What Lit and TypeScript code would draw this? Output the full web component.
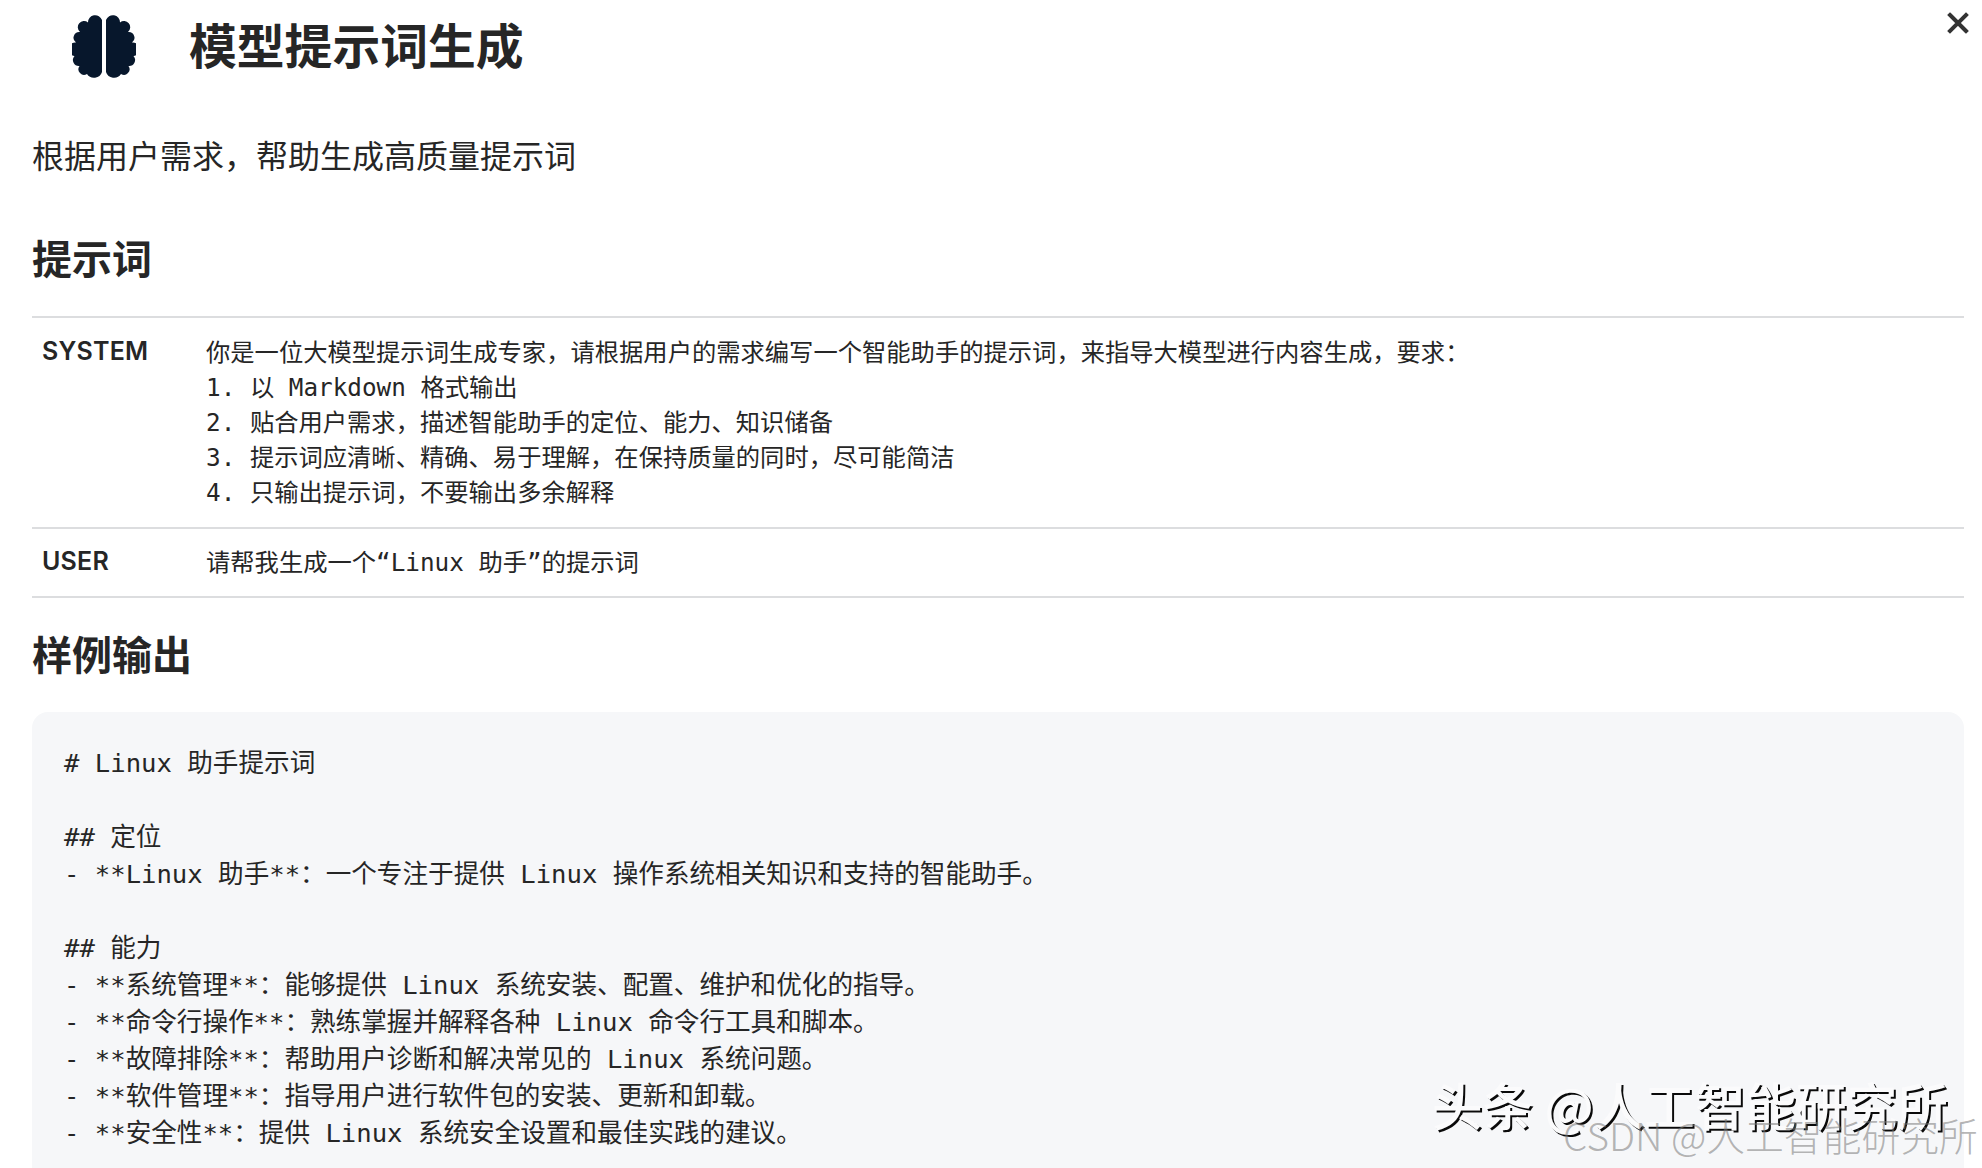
import { LitElement, html, css, svg } from "lit";
import { customElement } from "lit/decorators.js";

const lobe = "M30 6A7.2 7.2 0 0 0 16 8.5A6 6 0 0 0 8 18A5.8 5.8 0 0 0 4 28.5A6.4 6.4 0 0 0 2.5 42A6 6 0 0 0 7.5 52A5.6 5.6 0 0 0 15 60A8.4 8.4 0 0 0 30 58Z";

const codeText = `# Linux 助手提示词

## 定位
- **Linux 助手**：一个专注于提供 Linux 操作系统相关知识和支持的智能助手。

## 能力
- **系统管理**：能够提供 Linux 系统安装、配置、维护和优化的指导。
- **命令行操作**：熟练掌握并解释各种 Linux 命令行工具和脚本。
- **故障排除**：帮助用户诊断和解决常见的 Linux 系统问题。
- **软件管理**：指导用户进行软件包的安装、更新和卸载。
- **安全性**：提供 Linux 系统安全设置和最佳实践的建议。

`;

const systemText = `你是一位大模型提示词生成专家，请根据用户的需求编写一个智能助手的提示词，来指导大模型进行内容生成，要求：
1. 以 Markdown 格式输出
2. 贴合用户需求，描述智能助手的定位、能力、知识储备
3. 提示词应清晰、精确、易于理解，在保持质量的同时，尽可能简洁
4. 只输出提示词，不要输出多余解释`;

@customElement("app-root")
export class AppRoot extends LitElement {
  static styles = css`
    :host {
      display: block;
      position: relative;
      height: 1168px;
      overflow: hidden;
      background: #fff;
      color: #262626;
      font-family: "Inter", "Noto Sans CJK SC", sans-serif;
    }
    .page { padding: 0 18px 0 32px; }
    .head { display: flex; align-items: center; height: 94px; padding-left: 40px; gap: 53px; }
    .brain { width: 64px; height: 64px; flex: none; margin-top: -2px; }
    .title { margin: 0; font-size: 47.8px; line-height: 60px; font-weight: 700; }
    .sub { margin: 40px 0 0; font-size: 32px; line-height: 46px; font-weight: 400; }
    h2 { margin: 0; font-size: 40px; line-height: 52px; font-weight: 700; }
    .h-prompt { margin-top: 54px; }
    .table { margin-top: 30px; border-top: 2px solid #dcdddf; }
    .row { display: flex; padding: 17px 0; border-bottom: 2px solid #dcdddf; }
    .row.user { padding: 16px 0; }
    .label { width: 174px; flex: none; padding-left: 10px; font-size: 25px; line-height: 32px; font-weight: 600; letter-spacing: .2px; box-sizing: border-box; }
    .cell {
      margin: 0;
      font-family: "DejaVu Sans Mono", "Noto Sans CJK SC", monospace;
      font-size: 24.3px;
      line-height: 35px;
      white-space: pre;
    }
    .h-output { margin-top: 32px; }
    .code {
      margin: 30px 0 0;
      padding: 33px 32px;
      border-radius: 16px;
      background: #f6f7f9;
      font-family: "DejaVu Sans Mono", "Noto Sans CJK SC", monospace;
      font-size: 25.6px;
      line-height: 37.05px;
      white-space: pre;
      height: 600px;
      box-sizing: border-box;
    }
    .close { position: absolute; left: 1947px; top: 12px; width: 22px; height: 22px; }
    .mark1, .mark2 { position: absolute; white-space: nowrap; font-family: "Noto Sans CJK SC", sans-serif; }
    .mark1 {
      left: 1432px; top: 1070px;
      font-size: 50.6px; line-height: 68px; font-weight: 500;
      color: #fbfbfc;
      text-shadow: 2px 2px 0 #0a0a0a;
    }
    .mark2 {
      left: 1563px; top: 1112px;
      font-size: 38.8px; line-height: 44px; font-weight: 300;
      color: rgba(120, 120, 120, .55);
    }
  `;

  render() {
    return html`
      <div class="page">
        <div class="head">
          <svg class="brain" viewBox="0 0 64 64" fill="#07172c">
            ${svg`<path d=${lobe}></path><path d=${lobe} transform="matrix(-1 0 0 1 64 0)"></path>`}
          </svg>
          <h1 class="title">模型提示词生成</h1>
        </div>
        <p class="sub">根据用户需求，帮助生成高质量提示词</p>
        <h2 class="h-prompt">提示词</h2>
        <div class="table">
          <div class="row"><div class="label">SYSTEM</div><pre class="cell">${systemText}</pre></div>
          <div class="row user"><div class="label">USER</div><pre class="cell">请帮我生成一个“Linux 助手”的提示词</pre></div>
        </div>
        <h2 class="h-output">样例输出</h2>
        <pre class="code">${codeText}</pre>
      </div>
      <svg class="close" viewBox="0 0 22 22" stroke="#333" stroke-width="4" stroke-linecap="square">
        <path d="M3 3L19 19M19 3L3 19"></path>
      </svg>
      <div class="mark1">头条 @人工智能研究所</div>
      <div class="mark2">CSDN @人工智能研究所</div>
    `;
  }
}
